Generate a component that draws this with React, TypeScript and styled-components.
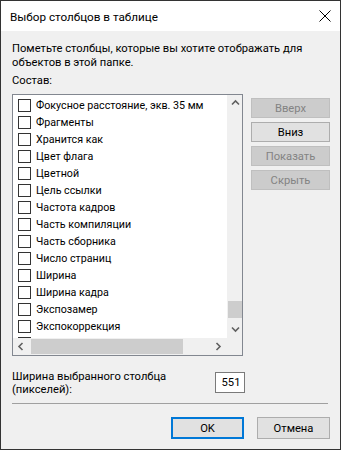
import React from "react";
import styled, { createGlobalStyle } from "styled-components";

const Global = createGlobalStyle`
  html, body { margin: 0; padding: 0; background: #f0f0f0; }
  body { font-family: "Segoe UI", Roboto, "Liberation Sans", sans-serif; font-size: 11.2px; color: #000; }
  * { box-sizing: border-box; }
`;

const Window = styled.div`
  width: 341px;
  height: 450px;
  border: 1px solid #333;
  background: #f0f0f0;
  display: flex;
  flex-direction: column;
  overflow: hidden;
`;

const TitleBar = styled.div`
  height: 30px;
  background: #fff;
  display: flex;
  align-items: center;
  padding-left: 9px;
  flex-shrink: 0;
`;

const Title = styled.div`
  flex: 1;
  font-size: 11.7px;
  line-height: 16px;
  padding-top: 1px;
`;

const CloseBox = styled.div`
  width: 30px;
  height: 30px;
  display: flex;
  align-items: center;
  justify-content: center;
`;

const Body = styled.div`
  flex: 1;
  display: flex;
  flex-direction: column;
  padding: 11px 10px 0 11px;
`;

const Text = styled.div<{ $mt?: number; $lh?: number }>`
  line-height: ${(p) => p.$lh ?? 14}px;
  white-space: nowrap;
  margin-top: ${(p) => p.$mt ?? 0}px;
`;

const MainRow = styled.div`
  display: flex;
  margin-top: 6px;
  gap: 8px;
  align-items: flex-start;
`;

const ListBox = styled.div`
  width: 233px;
  height: 262px;
  border: 1px solid #828790;
  background: #fff;
  display: grid;
  grid-template-columns: 214px 17px;
  grid-template-rows: 243px 17px;
  overflow: hidden;
`;

const Items = styled.div`
  overflow: hidden;
  padding-top: 2px;
  padding-left: 5px;
`;

const Row = styled.div`
  height: 17px;
  display: flex;
  align-items: center;
  gap: 5px;
  white-space: nowrap;
`;

const Check = styled.span`
  width: 13px;
  height: 13px;
  border: 1px solid #333;
  background: #fff;
  flex-shrink: 0;
`;

const Label = styled.span`
  font-size: 10.7px;
  line-height: 15px;
`;

const VScroll = styled.div`
  background: #f0f0f0;
  display: flex;
  flex-direction: column;
`;

const HScroll = styled.div`
  background: #f0f0f0;
  display: flex;
  align-items: center;
`;

const Corner = styled.div`
  background: #f0f0f0;
`;

const Arrow = styled.div`
  width: 17px;
  height: 17px;
  flex-shrink: 0;
  display: flex;
  align-items: center;
  justify-content: center;
`;

const VTrack = styled.div`
  flex: 1;
  display: flex;
  flex-direction: column;
  align-items: center;
`;

const VThumb = styled.div`
  width: 15px;
  height: 17px;
  background: #cdcdcd;
  margin-top: auto;
  margin-bottom: 3px;
`;

const HTrack = styled.div`
  flex: 1;
  height: 100%;
  display: flex;
  align-items: center;
`;

const HThumb = styled.div`
  width: 152px;
  height: 15px;
  background: #cdcdcd;
  margin-left: 1px;
`;

const ButtonCol = styled.div`
  display: flex;
  flex-direction: column;
  gap: 4px;
  margin-top: 4px;
`;

const SideButton = styled.div<{ $disabled?: boolean }>`
  width: 79px;
  height: 20px;
  display: flex;
  align-items: center;
  justify-content: center;
  border: 1px solid ${(p) => (p.$disabled ? "#bfbfbf" : "#adadad")};
  background: ${(p) => (p.$disabled ? "#cccccc" : "#e1e1e1")};
  color: ${(p) => (p.$disabled ? "#838383" : "#000")};
`;

const WidthRow = styled.div`
  width: 233px;
  margin-top: 14px;
  display: flex;
  justify-content: space-between;
  align-items: flex-start;
`;

const NumBox = styled.div`
  width: 30px;
  height: 21px;
  margin-top: 2px;
  border: 1px solid #7a7a7a;
  background: #fff;
  display: flex;
  align-items: center;
  justify-content: center;
  padding-left: 2px;
`;

const Separator = styled.div`
  height: 1px;
  width: 316px;
  margin-top: 7px;
  background: #a0a0a0;
`;

const Footer = styled.div`
  display: flex;
  justify-content: flex-end;
  gap: 13px;
  margin-top: 13px;
`;

const DialogButton = styled.div<{ $default?: boolean }>`
  width: 73px;
  height: 22px;
  display: flex;
  align-items: center;
  justify-content: center;
  background: #e1e1e1;
  border: ${(p) => (p.$default ? "2px solid #0078d7" : "1px solid #adadad")};
`;

const Chevron = ({ dir }: { dir: "up" | "down" | "left" | "right" }) => {
  const pts: Record<string, string> = {
    up: "1,5.5 4.5,2 8,5.5",
    down: "1,2.5 4.5,6 8,2.5",
    left: "5.5,1 2,4.5 5.5,8",
    right: "2.5,1 6,4.5 2.5,8",
  };
  return (
    <svg width="9" height="9" viewBox="0 0 9 9">
      <polyline points={pts[dir]} fill="none" stroke="#606060" strokeWidth="1.6" />
    </svg>
  );
};

const items = [
  "Фокусное расстояние, экв. 35 мм",
  "Фрагменты",
  "Хранится как",
  "Цвет флага",
  "Цветной",
  "Цель ссылки",
  "Частота кадров",
  "Часть компиляции",
  "Часть сборника",
  "Число страниц",
  "Ширина",
  "Ширина кадра",
  "Экспозамер",
  "Экспокоррекция",
  "Экспозиция",
];

export default function App() {
  return (
    <>
      <Global />
      <Window>
        <TitleBar>
          <Title>Выбор столбцов в таблице</Title>
          <CloseBox>
            <svg width="12" height="12" viewBox="0 0 12 12">
              <path d="M0.5 0.5 L11.5 11.5 M11.5 0.5 L0.5 11.5" stroke="#000" strokeWidth="1" />
            </svg>
          </CloseBox>
        </TitleBar>
        <Body>
          <Text>
            Пометьте столбцы, которые вы хотите отображать для
            <br />
            объектов в этой папке.
          </Text>
          <Text $mt={4}>Состав:</Text>
          <MainRow>
            <ListBox>
              <Items>
                {items.map((t) => (
                  <Row key={t}>
                    <Check />
                    <Label>{t}</Label>
                  </Row>
                ))}
              </Items>
              <VScroll>
                <Arrow>
                  <Chevron dir="up" />
                </Arrow>
                <VTrack>
                  <VThumb />
                </VTrack>
                <Arrow>
                  <Chevron dir="down" />
                </Arrow>
              </VScroll>
              <HScroll>
                <Arrow>
                  <Chevron dir="left" />
                </Arrow>
                <HTrack>
                  <HThumb />
                </HTrack>
                <Arrow>
                  <Chevron dir="right" />
                </Arrow>
              </HScroll>
              <Corner />
            </ListBox>
            <ButtonCol>
              <SideButton $disabled>Вверх</SideButton>
              <SideButton>Вниз</SideButton>
              <SideButton $disabled>Показать</SideButton>
              <SideButton $disabled>Скрыть</SideButton>
            </ButtonCol>
          </MainRow>
          <WidthRow>
            <Text $lh={13}>
              Ширина выбранного столбца
              <br />
              (пикселей):
            </Text>
            <NumBox>551</NumBox>
          </WidthRow>
          <Separator />
          <Footer>
            <DialogButton $default>OK</DialogButton>
            <DialogButton>Отмена</DialogButton>
          </Footer>
        </Body>
      </Window>
    </>
  );
}
